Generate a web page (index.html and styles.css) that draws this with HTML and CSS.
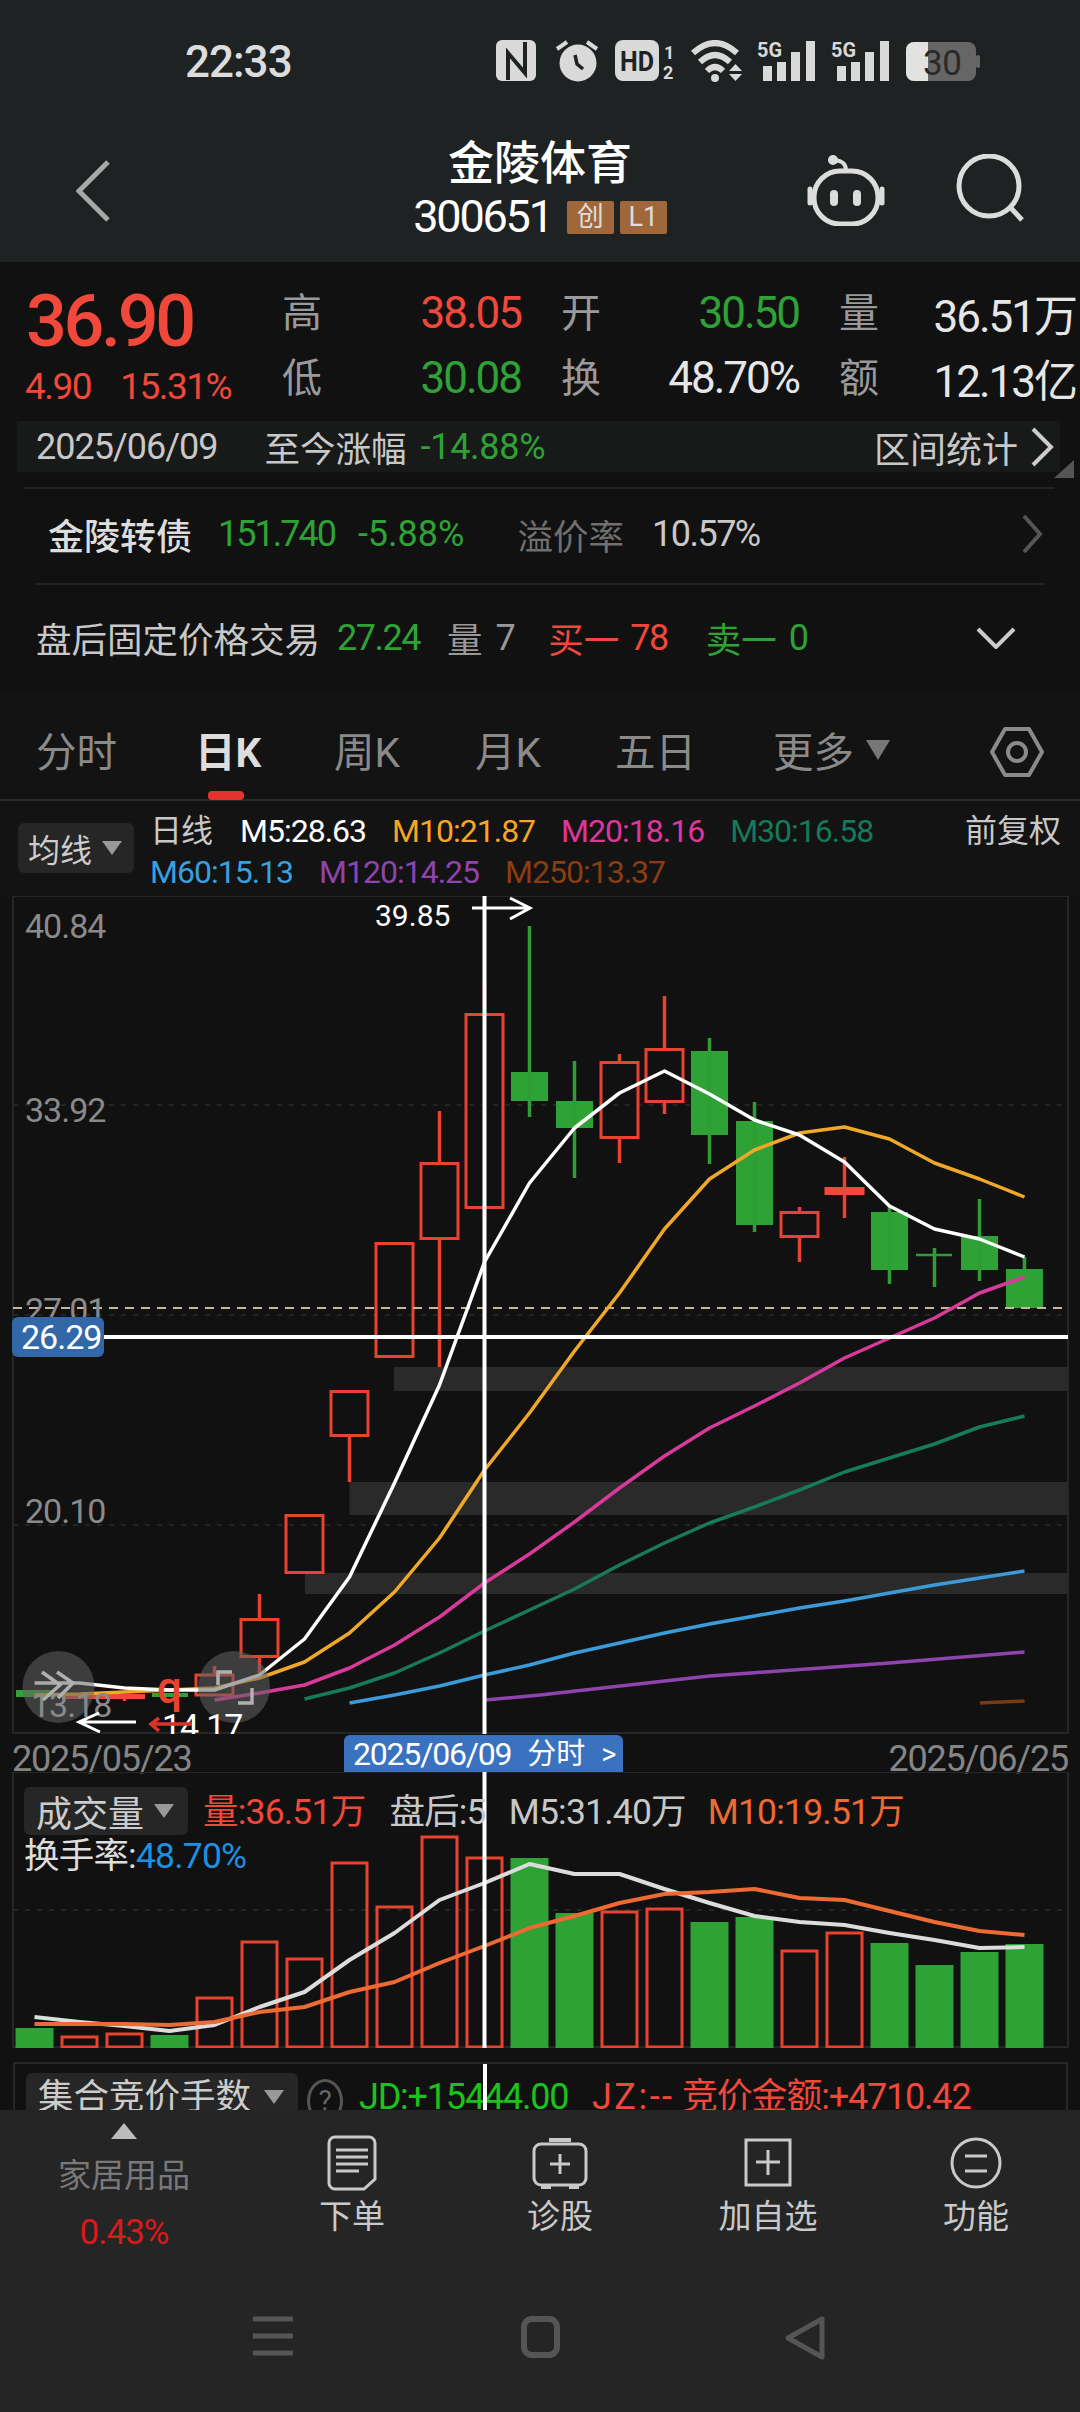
FILE: index.html
```html
<!DOCTYPE html>
<html lang="zh-CN">
<head>
  <meta charset="UTF-8">
  <title>金陵体育 300651</title>
  <link rel="stylesheet" href="styles.css">
</head>
<body>

<div class="topbar">
  <div class="status">
    <span class="time">22:33</span>
    <svg class="status-icons" width="484" height="42" viewBox="0 0 484 42">
      <rect x="0" y="0" width="40" height="41" rx="6" fill="#d8d9d8"/>
      <path d="M12 40V13L29 33V2" fill="none" stroke="#1f2222" stroke-width="4"/>
      <circle cx="82" cy="23" r="18.5" fill="#d8d9d8"/>
      <path d="M79 15l2 9 6 5" fill="none" stroke="#1f2222" stroke-width="3.5"/>
      <path d="M61 9L71 2M91 2l10 7" stroke="#d8d9d8" stroke-width="4"/>
      <rect x="119" y="0" width="44" height="41" rx="8" fill="#d8d9d8"/>
      <text class="ic-hd" x="124" y="31" textLength="34" lengthAdjust="spacingAndGlyphs">HD</text>
      <text class="ic-sim" x="168" y="19">1</text>
      <text class="ic-sim" x="167" y="39">2</text>
      <path d="M197 13Q219 -7 241 13M204 22Q219 8 234 22M211 31Q219 23 227 31" fill="none" stroke="#d8d9d8" stroke-width="6"/>
      <circle cx="219" cy="38" r="4" fill="#d8d9d8"/>
      <path d="M233 31l6.500-7 6.500 7zM233 34h13l-6.500 7z" fill="#d8d9d8"/>
      <text class="ic-5g" x="261" y="17" textLength="25" lengthAdjust="spacingAndGlyphs">5G</text>
      <path d="M267 26h9v15h-9zM281 22h9v19h-9zM295 12h9v29h-9zM310 1h9v40h-9z" fill="#d8d9d8"/>
      <text class="ic-5g" x="335" y="17" textLength="25" lengthAdjust="spacingAndGlyphs">5G</text>
      <path d="M341 26h9v15h-9zM355 22h9v19h-9zM369 12h9v29h-9zM384 1h9v40h-9z" fill="#d8d9d8"/>
      <rect x="410" y="2" width="70" height="39" rx="8" fill="#666"/>
      <path d="M432 2h-14a8 8 0 0 0-8 8v23a8 8 0 0 0 8 8h14z" fill="#e2e3e1"/>
      <rect x="480" y="15" width="4" height="13" rx="2" fill="#666"/>
      <text class="ic-batt" x="427" y="35" textLength="39">30</text>
    </svg>
  </div>
  <div class="nav">
    <svg class="back" width="34" height="62" viewBox="0 0 34 62">
      <path d="M32 2L3 31l29 29" fill="none" stroke="#a8a8a8" stroke-width="5"/>
    </svg>
    <div class="title-block">
      <div class="stock-name">金陵体育</div>
      <div class="stock-code">
        <span class="code">300651</span>
        <span class="badge">创</span>
        <span class="badge">L1</span>
      </div>
    </div>
    <div class="nav-actions">
      <svg width="78" height="72" viewBox="0 0 78 72">
        <rect x="7" y="17" width="64" height="53" rx="26" fill="none" stroke="#dcdcdc" stroke-width="5"/>
        <path d="M3 35v14M75 35v14" stroke="#dcdcdc" stroke-width="5" stroke-linecap="round"/>
        <path d="M39 17c0-7-3-10-12-11" fill="none" stroke="#dcdcdc" stroke-width="4"/>
        <circle cx="26" cy="6" r="5" fill="#dcdcdc"/>
        <rect x="23" y="36" width="8" height="16" rx="4" fill="#dcdcdc"/>
        <rect x="46" y="36" width="8" height="16" rx="4" fill="#dcdcdc"/>
      </svg>
      <svg width="68" height="68" viewBox="0 0 68 68">
        <circle cx="33" cy="32" r="30" fill="none" stroke="#dcdcdc" stroke-width="5"/>
        <path d="M54 53l12 13" stroke="#dcdcdc" stroke-width="5"/>
      </svg>
    </div>
  </div>
</div>

<div class="quote">
  <div class="price-block">
    <div class="price">36.90</div>
    <div class="price-sub"><span>4.90</span><span>15.31%</span></div>
  </div>
  <div class="stats">
    <div class="stat"><span class="stat-label">高</span><span class="stat-val red">38.05</span></div>
    <div class="stat"><span class="stat-label">开</span><span class="stat-val green">30.50</span></div>
    <div class="stat"><span class="stat-label">量</span><span class="stat-val">36.51万</span></div>
    <div class="stat"><span class="stat-label">低</span><span class="stat-val green">30.08</span></div>
    <div class="stat"><span class="stat-label">换</span><span class="stat-val">48.70%</span></div>
    <div class="stat"><span class="stat-label">额</span><span class="stat-val">12.13亿</span></div>
  </div>
</div>

<div class="range">
  <span class="range-date">2025/06/09</span>
  <span class="range-label">至今涨幅</span>
  <span class="range-val green">-14.88%</span>
  <span class="range-more">区间统计</span>
  <svg width="24" height="40" viewBox="0 0 24 40">
    <path d="M3 2l18 18L3 38" fill="none" stroke="#ccc" stroke-width="4"/>
  </svg>
  <i class="range-corner"></i>
</div>

<div class="info-row bond">
  <span class="bond-name">金陵转债</span>
  <span class="num tight green gap-26">151.740</span>
  <span class="num loose green gap-23">-5.88%</span>
  <span class="muted gap-53">溢价率</span>
  <span class="num soft gap-28">10.57%</span>
  <svg class="row-arrow" width="22" height="40" viewBox="0 0 22 40">
    <path d="M3 2l16 18L3 38" fill="none" stroke="#555" stroke-width="4"/>
  </svg>
</div>

<div class="info-row after">
  <span class="soft">盘后固定价格交易</span>
  <span class="num green gap-17">27.24</span>
  <span class="soft-dim gap-27">量</span>
  <span class="num soft-dim gap-13">7</span>
  <span class="red gap-34">买一</span>
  <span class="num red gap-11">78</span>
  <span class="green gap-38">卖一</span>
  <span class="num green gap-12">0</span>
  <svg class="row-arrow" width="40" height="22" viewBox="0 0 40 22">
    <path d="M2 2l18 18L38 2" fill="none" stroke="#ccc" stroke-width="4"/>
  </svg>
</div>

<div class="tabs">
  <span class="tab">分时</span>
  <span class="tab tab-active">日K</span>
  <span class="tab">周K</span>
  <span class="tab">月K</span>
  <span class="tab">五日</span>
  <span class="tab tab-more">更多<i class="tri tri-tab"></i></span>
  <svg class="tab-gear" width="54" height="52" viewBox="0 0 54 52">
    <path d="M15 3h24l13 23-13 23H15L2 26z" fill="none" stroke="#8a8a8a" stroke-width="4" stroke-linejoin="round"/>
    <circle cx="27" cy="26" r="9" fill="none" stroke="#8a8a8a" stroke-width="4"/>
  </svg>
</div>

<div class="legend">
  <div class="select select-ma">均线<i class="tri tri-sel"></i></div>
  <div class="legend-lines">
    <div class="legend-row">
      <span class="soft legend-period">日线</span>
      <span class="c-m5">M5:28.63</span>
      <span class="c-m10">M10:21.87</span>
      <span class="c-m20">M20:18.16</span>
      <span class="c-m30">M30:16.58</span>
    </div>
    <div class="legend-row">
      <span class="c-m60">M60:15.13</span>
      <span class="c-m120">M120:14.25</span>
      <span class="c-m250">M250:13.37</span>
    </div>
  </div>
  <span class="fq">前复权</span>
</div>

<svg class="kline" width="1080" height="838" viewBox="0 896 1080 838">
  <rect class="frame" x="13" y="896" width="1055" height="837"/>
  <path class="grid" d="M13 1105H1068M13 1315H1068M13 1525H1068"/>
  <path class="band" d="M394 1367H1068V1391H394zM349.500 1482H1068V1515H349.500zM305 1573H1068V1594H305z"/>

  <g class="hollow">
    <rect x="466" y="1014.500" width="37" height="193"/>
    <rect x="421" y="1163.500" width="37" height="75"/>
    <rect x="376" y="1243.500" width="37" height="113"/>
    <rect x="331" y="1391.500" width="37" height="44"/>
    <rect x="286" y="1515.500" width="37" height="57"/>
    <rect x="241" y="1619.500" width="37" height="37"/>
    <rect x="196" y="1675" width="37" height="20"/>
    <rect x="601" y="1062.500" width="37" height="75"/>
    <rect x="646" y="1049.500" width="37" height="52"/>
    <rect x="781" y="1212.500" width="37" height="24"/>
    <path d="M439.500 1111V1162M439.500 1240V1367M349.500 1437V1482M259.500 1594V1618M259.500 1658V1673M214.500 1666V1674M619.500 1054V1061M619.500 1139V1163M664.500 996V1048M664.500 1103V1114M799.500 1207V1211M799.500 1237V1262M844.500 1157V1218M124.500 1696V1701"/>
    <path class="faint" d="M484.500 980V1013M484.500 1209V1220"/>
  </g>
  <rect class="fill-red" x="824.500" y="1187" width="40" height="8"/>
  <rect class="fill-red" x="62" y="1694" width="83" height="5"/>

  <g class="solid">
    <rect x="511" y="1072" width="37" height="29"/>
    <rect x="556" y="1101" width="37" height="27"/>
    <rect x="691" y="1051" width="37" height="84"/>
    <rect x="736" y="1121" width="37" height="104"/>
    <rect x="871" y="1212" width="37" height="58"/>
    <rect x="961" y="1236" width="37" height="34"/>
    <rect x="1006" y="1269" width="37" height="39"/>
    <rect x="16" y="1690" width="36" height="7"/>
    <rect x="152" y="1693" width="36" height="4"/>
    <path d="M529.500 926V1117M574.500 1061V1178M709.500 1038V1164M754.500 1102V1232M889.500 1207V1284M934.500 1248V1287M979.500 1199V1281M1024.500 1257V1269"/>
    <path class="doji" d="M916 1255H952"/>
  </g>

  <path class="dash-last" d="M13 1308H1062"/>
  <g class="ma">
    <polyline class="m250" points="980,1703 1024.500,1701"/>
    <polyline class="m120" points="485,1700 540,1695 709.500,1676 889.500,1663 1024.500,1652"/>
    <polyline class="m60" points="349.500,1703 394.500,1695 439.500,1686 484.500,1675 529.500,1665 574.500,1653 619.500,1643 664.500,1633 709.500,1624 754.500,1616 799.500,1608 844.500,1601 889.500,1593 934.500,1585 979.500,1578 1024.500,1571"/>
    <polyline class="m30" points="304.500,1699 349.500,1688 394.500,1673 439.500,1653 484.500,1631 529.500,1610 574.500,1589 619.500,1565 664.500,1543 709.500,1523 754.500,1507 799.500,1490 844.500,1472 889.500,1458 934.500,1444 979.500,1427 1024.500,1416"/>
    <polyline class="m20" points="214.500,1700 259.500,1693 304.500,1685 349.500,1668 394.500,1645 439.500,1617 484.500,1583 529.500,1554 574.500,1522 619.500,1488 664.500,1456 709.500,1428 754.500,1406 799.500,1383 844.500,1358 889.500,1338 934.500,1318 979.500,1293 1024.500,1277"/>
    <polyline class="m10" points="34.500,1695 79.500,1694 124.500,1692 169.500,1690 214.500,1688 259.500,1678 304.500,1662 349.500,1633 394.500,1592 439.500,1538 484.500,1470 529.500,1413 574.500,1351 619.500,1293 664.500,1229 709.500,1179 754.500,1150 799.500,1133 844.500,1127 889.500,1139 934.500,1163 979.500,1179 1024.500,1197"/>
    <polyline class="m5" points="34.500,1683 79.500,1683 124.500,1688 169.500,1690 214.500,1690 259.500,1675 304.500,1639 349.500,1577 394.500,1483 439.500,1385 484.500,1262 529.500,1183 574.500,1128 619.500,1093 664.500,1071 709.500,1094 754.500,1120 799.500,1135 844.500,1162 889.500,1206 934.500,1229 979.500,1239 1024.500,1257"/>
  </g>

  <text class="mark-q" x="157" y="1703">q</text>
  <circle class="float-btn" cx="58.500" cy="1687" r="36"/>
  <circle class="float-btn" cx="234" cy="1687" r="36"/>

  <text class="axis-num" x="25" y="938">40.84</text>
  <text class="axis-num" x="25" y="1122">33.92</text>
  <text class="axis-num" x="25" y="1322">27.01</text>
  <text class="axis-num" x="25" y="1523">20.10</text>
  <text class="axis-num" x="31" y="1717">13.18</text>

  <text class="peak-num" x="375" y="926">39.85</text>
  <path class="arrow" d="M472 908H530M510 898l20 10-20 11"/>
  <path class="arrow" d="M136 1722H80M99 1713l-20 9 21 10"/>
  <text class="low-num" x="162" y="1738">14.17</text>
  <path class="arrow-red" d="M192 1724H151M159 1718l-8 6 8 7"/>

  <path class="cross" d="M484.500 896V1734M104 1337H1068"/>
  <path class="price-tag" d="M18 1317h80a6 6 0 0 1 6 6v28a6 6 0 0 1-6 6H18a6 6 0 0 1-6-6v-28a6 6 0 0 1 6-6z"/>
  <text class="tag-num" x="21" y="1349">26.29</text>

  <path class="float-ic" d="M42 1672l18 13-17 15M57 1672l16 11-15 15"/>
  <path class="float-ic" d="M218 1685v-13h14M252 1688v15h-14"/>
</svg>

<div class="axis">
  <span>2025/05/23</span>
  <span class="date-tag"><span class="tag-date">2025/06/09</span><span>分时</span><span class="tag-gt">&gt;</span></span>
  <span>2025/06/25</span>
</div>

<div class="vol-panel">
  <svg class="vol-chart" width="1080" height="276" viewBox="0 1772 1080 276">
    <rect class="frame" x="13" y="1772" width="1055" height="275"/>
    <path class="grid" d="M13 1910H1068"/>
    <g class="vol-up">
      <rect x="62" y="2037" width="35" height="10"/>
      <rect x="107" y="2034" width="35" height="13"/>
      <rect x="197" y="1998" width="35" height="49"/>
      <rect x="242" y="1942" width="35" height="105"/>
      <rect x="287" y="1959" width="35" height="88"/>
      <rect x="332" y="1863" width="35" height="184"/>
      <rect x="377" y="1907" width="35" height="140"/>
      <rect x="422" y="1837" width="35" height="210"/>
      <rect x="467" y="1858" width="35" height="189"/>
      <rect x="602" y="1912" width="35" height="135"/>
      <rect x="647" y="1909" width="35" height="138"/>
      <rect x="782" y="1951" width="35" height="96"/>
      <rect x="827" y="1933" width="35" height="114"/>
    </g>
    <g class="solid">
      <rect x="15.500" y="2028" width="38" height="20"/>
      <rect x="150.500" y="2035" width="38" height="13"/>
      <rect x="510.500" y="1858" width="38" height="190"/>
      <rect x="555.500" y="1913" width="38" height="135"/>
      <rect x="690.500" y="1922" width="38" height="126"/>
      <rect x="735.500" y="1917" width="38" height="131"/>
      <rect x="870.500" y="1943" width="38" height="105"/>
      <rect x="915.500" y="1965" width="38" height="83"/>
      <rect x="960.500" y="1952" width="38" height="96"/>
      <rect x="1005.500" y="1944" width="38" height="104"/>
    </g>
    <polyline class="vm5" points="34.500,2017 79.500,2022 124.500,2026 169.500,2031 214.500,2025 259.500,2007 304.500,1992 349.500,1960 394.500,1933 439.500,1900 484.500,1883 529.500,1864 574.500,1874 619.500,1874 664.500,1889 709.500,1903 754.500,1916 799.500,1922 844.500,1925 889.500,1933 934.500,1940 979.500,1948 1024.500,1947"/>
    <polyline class="vm10" points="34.500,2024 79.500,2024 124.500,2024 169.500,2025 214.500,2022 259.500,2012 304.500,2007 349.500,1992 394.500,1982 439.500,1963 484.500,1946 529.500,1928 574.500,1916 619.500,1903 664.500,1894 709.500,1892 754.500,1889 799.500,1898 844.500,1900 889.500,1911 934.500,1922 979.500,1931 1024.500,1935"/>
    <path class="cross" d="M484.500 1772V2048"/>
  </svg>
  <div class="vol-legend">
    <div class="vol-row">
      <div class="select select-vol">成交量<i class="tri tri-sel"></i></div>
      <span class="red gap-15">量:36.51万</span>
      <span class="soft gap-24">盘后:5</span>
      <span class="soft gap-23">M5:31.40万</span>
      <span class="c-vm10 gap-22">M10:19.51万</span>
    </div>
    <div class="vol-rate">换手率:<span class="c-rate">48.70%</span></div>
  </div>
</div>

<div class="auction">
  <div class="select select-auction">集合竞价手数<i class="tri tri-sel"></i></div>
  <span class="help">?</span>
  <span class="c-jd">JD:+15444.00</span>
  <span class="red c-jz">JZ:--</span>
  <span class="red c-amt">竞价金额:+4710.42</span>
  <i class="auction-cross"></i>
</div>

<div class="dock">
  <div class="tools">
    <div class="sector">
      <i class="tri tri-up"></i>
      <span class="sector-name">家居用品</span>
      <span class="sector-pct">0.43%</span>
    </div>
    <div class="tool">
      <svg width="50" height="56" viewBox="0 0 50 56">
        <path d="M8 2h34a6 6 0 0 1 6 6v36L37 54H8a6 6 0 0 1-6-6V8a6 6 0 0 1 6-6z" fill="none" stroke="#c9c9c9" stroke-width="3"/>
        <path d="M9 15h32M9 22h32M9 29h32M9 36h23" stroke="#c9c9c9" stroke-width="3"/>
      </svg>
      <span>下单</span>
    </div>
    <div class="tool">
      <svg width="56" height="56" viewBox="0 0 56 56">
        <path d="M17 5h22M9 52h10M37 52h10" stroke="#c9c9c9" stroke-width="4"/>
        <rect x="2" y="9" width="52" height="41" rx="7" fill="none" stroke="#c9c9c9" stroke-width="3"/>
        <path d="M18 29h20M28 19v20" stroke="#c9c9c9" stroke-width="3"/>
      </svg>
      <span>诊股</span>
    </div>
    <div class="tool">
      <svg width="50" height="56" viewBox="0 0 50 56">
        <rect x="3" y="5" width="44" height="45" fill="none" stroke="#c9c9c9" stroke-width="3"/>
        <path d="M13 27h24M25 15v25" stroke="#c9c9c9" stroke-width="3"/>
      </svg>
      <span>加自选</span>
    </div>
    <div class="tool">
      <svg width="52" height="56" viewBox="0 0 52 56">
        <circle cx="26" cy="28" r="24" fill="none" stroke="#c9c9c9" stroke-width="3"/>
        <path d="M15 21h22M15 36h22" stroke="#c9c9c9" stroke-width="3"/>
      </svg>
      <span>功能</span>
    </div>
  </div>
  <div class="syskeys">
    <svg width="40" height="40" viewBox="0 0 40 40">
      <path d="M0 3h40M0 20h40M0 37h40" stroke="#555" stroke-width="5"/>
    </svg>
    <svg width="40" height="42" viewBox="0 0 40 42">
      <rect x="3" y="3" width="33" height="36" rx="8" fill="none" stroke="#555" stroke-width="6"/>
    </svg>
    <svg width="40" height="44" viewBox="0 0 40 44">
      <path d="M37 3v38L3 22z" fill="none" stroke="#555" stroke-width="5" stroke-linejoin="round"/>
    </svg>
  </div>
</div>

</body>
</html>
```

FILE: styles.css
```css
* {
  box-sizing: border-box;
}

body {
  margin: 0;
  width: 1080px;
  height: 2412px;
  overflow: hidden;
  background: #111;
  color: #e6e6e6;
  font-family: Roboto, "Noto Sans CJK SC", sans-serif;
  display: flex;
  flex-direction: column;
}

svg {
  display: block;
  flex: none;
}

i {
  display: block;
}

.red { color: #f0483a; }
.green { color: #2fa236; }
.soft { color: #c8c8c8; }
.soft-dim { color: #999; }
.muted { color: #6f6f6f; }

.gap-11 { margin-left: 11px; }
.gap-12 { margin-left: 12px; }
.gap-13 { margin-left: 13px; }
.gap-15 { margin-left: 15px; }
.gap-17 { margin-left: 17px; }
.gap-22 { margin-left: 22px; }
.gap-23 { margin-left: 23px; }
.gap-24 { margin-left: 24px; }
.gap-26 { margin-left: 26px; }
.gap-27 { margin-left: 27px; }
.gap-28 { margin-left: 28px; }
.gap-34 { margin-left: 34px; }
.gap-38 { margin-left: 38px; }
.gap-53 { margin-left: 53px; }

/* top bar */
.topbar {
  height: 262px;
  background: #1f2222;
  flex: none;
}

.status {
  height: 124px;
  padding: 40px 100px 0 185px;
  display: flex;
  justify-content: space-between;
  align-items: flex-start;
}

.time {
  font-size: 44px;
  line-height: 44px;
  letter-spacing: -1px;
  font-weight: 500;
  color: #dcdcdc;
}

.ic-hd { font: 700 28px Roboto, sans-serif; fill: #1f2222; }
.ic-sim { font: 700 18px Roboto, sans-serif; fill: #d8d9d8; }
.ic-5g { font: 700 20px Roboto, sans-serif; fill: #d8d9d8; }
.ic-batt { font: 400 35px Roboto, sans-serif; fill: #2a2a2a; }

.nav {
  display: grid;
  grid-template-columns: 1fr auto 1fr;
  padding: 0 56px;
}

.back {
  margin: 36px 0 0 20px;
}

.title-block {
  display: flex;
  flex-direction: column;
  align-items: center;
}

.stock-name {
  margin-top: 12px;
  font-size: 46px;
  line-height: 54px;
  font-weight: 500;
  color: #fff;
}

.stock-code {
  margin-top: 10px;
  display: flex;
  align-items: center;
  gap: 6px;
}

.code {
  margin-right: 9px;
  font-size: 45px;
  line-height: 34px;
  letter-spacing: -2.200px;
  color: #fff;
}

.badge {
  width: 47px;
  height: 33px;
  border-radius: 2px;
  background: #a0683a;
  color: #ddd;
  font-size: 27px;
  line-height: 33px;
  text-align: center;
}

.nav-actions {
  margin-top: 30px;
  display: flex;
  justify-content: flex-end;
  gap: 71px;
}

/* quote */
.quote {
  height: 159px;
  padding: 18px 0 0 26px;
  display: flex;
  flex: none;
}

.price-block {
  width: 256px;
  margin-top: 2px;
}

.price {
  font-size: 72px;
  line-height: 80px;
  letter-spacing: -3.400px;
  font-weight: 500;
  color: #f0483a;
}

.price-sub {
  margin-left: -1px;
  display: flex;
  gap: 29px;
  font-size: 37px;
  line-height: 50px;
  letter-spacing: -1.500px;
  color: #f0483a;
}

.stats {
  display: grid;
  grid-template-columns: 239px 238px 237px;
  grid-auto-rows: 65px;
  column-gap: 40px;
}

.stat {
  display: flex;
  justify-content: space-between;
  align-items: center;
}

.stat-label {
  margin-bottom: 6px;
  font-size: 40px;
  color: #9a9a9a;
}

.stat-val {
  font-size: 44px;
  letter-spacing: -2px;
}

/* rows under the quote */
.range {
  position: relative;
  height: 51px;
  margin: 0 20px 0 17px;
  padding-left: 19px;
  display: flex;
  flex: none;
  align-items: center;
  background: #181919;
  font-size: 36px;
  color: #c8c8c8;
}

.range-date {
  letter-spacing: -1px;
}

.range-label {
  margin-left: 47px;
  font-size: 35.500px;
}

.range-val {
  margin-left: 14px;
  letter-spacing: -0.300px;
}

.range-more {
  margin-left: auto;
  margin-right: 12px;
}

.range svg {
  margin-right: 6px;
}

.range-corner {
  position: absolute;
  right: -14px;
  bottom: -6px;
  width: 20px;
  height: 18px;
  background: #555;
  clip-path: polygon(100% 0, 100% 100%, 0 100%);
}

.info-row {
  display: flex;
  flex: none;
  align-items: center;
  font-size: 35.500px;
}

.info-row .num {
  font-size: 36px;
  letter-spacing: -1.500px;
}

.info-row .tight {
  letter-spacing: -2px;
}

.info-row .loose {
  letter-spacing: 0;
}

.bond {
  height: 96px;
  margin: 15px 26px 0 24px;
  padding: 0 11px 4px 24px;
  border-top: 2px solid #222;
}

.bond-name {
  font-size: 36px;
  font-weight: 500;
  color: #ddd;
}

.after {
  height: 109px;
  margin: 0 36px;
  padding: 0 28px 2px 0;
  border-top: 2px solid #222;
}

.row-arrow {
  margin-left: auto;
}

/* period tabs */
.tabs {
  height: 109px;
  padding: 14px 0 0 36px;
  display: grid;
  flex: none;
  grid-template-columns: 159px 139px 141px 140px 158px 217px auto;
  border-bottom: 2px solid #2a2a2a;
  background: #131313;
}

.tab {
  position: relative;
  font-size: 40.500px;
  line-height: 94px;
  color: #8a8a8a;
}

.tab-active {
  font-weight: 700;
  color: #ddd;
}

.tab-active::after {
  content: "";
  position: absolute;
  left: 13px;
  bottom: 0;
  width: 36px;
  height: 9px;
  border-radius: 4px;
  background: #e5322d;
}

.tab-more {
  display: flex;
  align-items: center;
  gap: 12px;
}

.tab-gear {
  margin-top: 20px;
}

.tri {
  width: 0;
  height: 0;
  border-style: solid;
  border-color: transparent;
}

.tri-tab {
  margin-top: -6px;
  border-width: 20px 12px 0;
  border-top-color: #777;
}

.tri-sel {
  border-width: 14px 10px 0;
  border-top-color: #999;
}

.tri-up {
  border-width: 0 13px 16px;
  border-bottom-color: #bbb;
}

/* moving average legend */
.legend {
  height: 95px;
  padding-left: 18px;
  display: flex;
  flex: none;
  font-size: 32px;
  background: #131313;
}

.select {
  display: flex;
  align-items: center;
  border-radius: 6px;
  background: #262626;
  color: #ccc;
}

.select-ma {
  width: 116px;
  height: 50px;
  margin-top: 22px;
  padding-left: 10px;
  gap: 10px;
  font-size: 32px;
}

.legend-lines {
  margin-left: 16px;
  padding-top: 10px;
  letter-spacing: -1px;
}

.legend-row {
  display: flex;
  gap: 26px;
  line-height: 41px;
}

.legend-period {
  margin-right: 2px;
}

.c-m5 { color: #fff; }
.c-m10 { color: #f5a623; }
.c-m20 { color: #e0359a; }
.c-m30 { color: #137a5a; }
.c-m60 { color: #3a9fdf; }
.c-m120 { color: #8e44ad; }
.c-m250 { color: #8a3d10; }

.fq {
  margin-left: auto;
  padding: 10px 19px 0 0;
  line-height: 41px;
  color: #c8c8c8;
}

/* k-line canvas */
.kline {
  flex: none;
}

.frame {
  fill: none;
  stroke: #262626;
  stroke-width: 2;
}

.grid {
  fill: none;
  stroke: #242424;
  stroke-width: 2;
  stroke-dasharray: 5 7;
}

.band {
  fill: #2a2a2a;
}

.hollow rect,
.vol-up rect {
  fill: none;
  stroke: #e8432f;
  stroke-width: 3;
}

.hollow path {
  fill: none;
  stroke: #e8432f;
  stroke-width: 3.500;
}

.hollow .faint {
  opacity: 0.5;
}

.fill-red {
  fill: #f0483a;
}

.solid rect {
  fill: #2fa235;
}

.solid path {
  fill: none;
  stroke: #2f9c35;
  stroke-width: 3.500;
}

.solid .doji {
  stroke-width: 2.500;
}

.dash-last {
  fill: none;
  stroke: #c9b79c;
  stroke-width: 2;
  stroke-dasharray: 9 7;
}

.ma polyline {
  fill: none;
  stroke-width: 3.500;
  stroke-linejoin: round;
}

.m5 { stroke: #fff; }
.m10 { stroke: #f0a828; }
.m20 { stroke: #d83a9c; }
.m30 { stroke: #177a58; }
.m60 { stroke: #3a9bd8; }
.m120 { stroke: #8e44ad; }
.m250 { stroke: #7a3a12; }

.axis-num {
  font-size: 34px;
  letter-spacing: -1px;
  fill: #8a8a8a;
}

.mark-q {
  font-size: 44px;
  font-weight: 500;
  fill: #e8432f;
}

.peak-num {
  font-size: 30px;
  fill: #fff;
}

.low-num {
  font-size: 34px;
  letter-spacing: -1px;
  fill: #fff;
}

.arrow {
  fill: none;
  stroke: #fff;
  stroke-width: 3;
}

.arrow-red {
  fill: none;
  stroke: #d9342a;
  stroke-width: 3.500;
}

.cross {
  fill: none;
  stroke: #fff;
  stroke-width: 4;
}

.price-tag {
  fill: #3368a8;
}

.tag-num {
  font-size: 34px;
  letter-spacing: -1px;
  fill: #fff;
}

.float-btn {
  fill: rgba(99, 99, 99, 0.55);
}

.float-ic {
  fill: none;
  stroke: #b0b0b0;
  stroke-width: 3.500;
}

/* date axis */
.axis {
  position: relative;
  height: 38px;
  padding: 12px 12px 0;
  display: flex;
  flex: none;
  justify-content: space-between;
  font-size: 36px;
  line-height: 26px;
  letter-spacing: -1.200px;
  color: #858585;
}

.date-tag {
  position: absolute;
  left: 344px;
  top: 1px;
  width: 279px;
  height: 37px;
  padding-left: 9px;
  display: flex;
  align-items: center;
  border-radius: 6px 6px 0 0;
  background: #3a72c0;
  color: #fff;
  font-size: 29px;
  letter-spacing: 0;
}

.tag-date {
  margin-right: 16px;
  font-size: 32px;
  letter-spacing: -1.200px;
}

.tag-gt {
  margin-left: 16px;
}

/* volume panel */
.vol-panel {
  position: relative;
  height: 276px;
  flex: none;
}

.vm5,
.vm10 {
  fill: none;
  stroke-width: 4;
  stroke-linejoin: round;
}

.vm5 { stroke: #dcdcdc; }
.vm10 { stroke: #ee6a33; }

.vol-legend {
  position: absolute;
  left: 24px;
  top: 11px;
  font-size: 35.500px;
  letter-spacing: -0.800px;
}

.vol-row {
  display: flex;
  align-items: center;
}

.vol-row > span {
  margin-bottom: 4px;
}

.select-vol {
  width: 164px;
  height: 48px;
  padding-left: 12px;
  gap: 10px;
  font-size: 36px;
  letter-spacing: 0;
}

.c-vm10 { color: #ee6a33; }

.vol-rate {
  margin-top: -2px;
  line-height: 40px;
  color: #ddd;
}

.c-rate {
  color: #1e90e0;
}

/* auction panel, cut off by the dock */
.auction {
  position: relative;
  height: 48px;
  margin: 14px 12px 0 13px;
  padding: 9px 0 0 11px;
  display: flex;
  flex: none;
  overflow: hidden;
  border: 2px solid #262626;
  border-bottom: none;
  font-size: 36px;
  line-height: 48px;
  letter-spacing: -1.200px;
}

.select-auction {
  width: 272px;
  height: 48px;
  flex: none;
  padding-left: 12px;
  gap: 13px;
  letter-spacing: 0;
  font-size: 35.500px;
}

.help {
  width: 36px;
  height: 44px;
  margin: 6px 16px 0 9px;
  flex: none;
  border: 3px solid #555;
  border-radius: 50%;
  font-size: 28px;
  line-height: 38px;
  text-align: center;
  letter-spacing: 0;
  color: #666;
}

.c-jd {
  width: 233px;
  flex: none;
  color: #1bc21b;
}

.c-jz {
  width: 90px;
  flex: none;
  letter-spacing: 2.500px;
}

.auction-cross {
  position: absolute;
  left: 467.500px;
  top: -2px;
  width: 4px;
  height: 50px;
  background: #fff;
}

/* bottom dock */
.dock {
  flex: 1;
  background: #252525;
}

.tools {
  height: 206px;
  display: grid;
  grid-template-columns: 248px repeat(4, 208px);
}

.sector {
  display: flex;
  flex-direction: column;
  align-items: center;
  padding-top: 13px;
}

.sector-name {
  margin-top: 15px;
  font-size: 33px;
  line-height: 44px;
  color: #787878;
}

.sector-pct {
  margin-top: 15px;
  font-size: 35px;
  line-height: 40px;
  letter-spacing: -1px;
  color: #d81a1a;
}

.tool {
  padding-top: 25px;
  display: flex;
  flex-direction: column;
  align-items: center;
  font-size: 33px;
  line-height: 38px;
  color: #c9c9c9;
}

.tool span {
  margin-top: 7px;
}

.syskeys {
  padding-left: 253px;
  display: flex;
  gap: 228px;
}

.syskeys svg:last-child {
  margin-left: -4px;
}
```
